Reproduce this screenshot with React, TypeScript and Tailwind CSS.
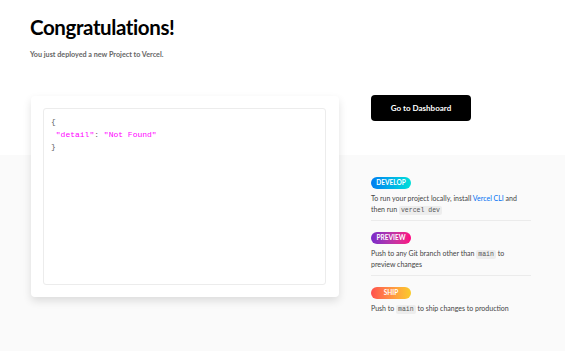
const codeClass =
  "inline-block rounded-[2px] bg-[#ededed] px-[2px] align-baseline font-['Liberation_Mono',monospace] text-[6.5px] leading-[9px] text-[#555]";

const steps = [
  {
    label: "DEVELOP",
    badge: "bg-gradient-to-r from-[#007cf0] to-[#00dfd8]",
    body: (
      <>
        To run your project locally, install{" "}
        <a href="#" className="text-[#0070f3]">
          Vercel CLI
        </a>{" "}
        and then run <code className={codeClass}>vercel dev</code>
      </>
    ),
  },
  {
    label: "PREVIEW",
    badge: "bg-gradient-to-r from-[#7928ca] to-[#ff0080]",
    body: (
      <>
        Push to any Git branch other than <code className={codeClass}>main</code> to preview changes
      </>
    ),
  },
  {
    label: "SHIP",
    badge: "bg-gradient-to-r from-[#ff4d4d] to-[#f9cb28]",
    body: (
      <>
        Push to <code className={codeClass}>main</code> to ship changes to production
      </>
    ),
  },
];

const App = () => {
  return (
    <div className="min-h-[351px] bg-[#fafafa] font-['Lato',sans-serif]">
      <header className="h-[155px] bg-white px-[30px] pt-[13px]">
        <h1 className="text-[20.5px] leading-[28px] font-bold tracking-[-0.4px] text-black">Congratulations!</h1>
        <p className="mt-[9px] text-[7.2px] leading-[10px] font-bold text-[#666]">
          You just deployed a new Project to Vercel.
        </p>
      </header>

      <main className="flex items-start px-[31px]">
        <div className="-mt-[59px] h-[201px] w-[308px] rounded-[4px] bg-white p-[12px] pr-[13px] shadow-[0_4px_9px_rgba(0,0,0,0.12)]">
          <div className="h-full rounded-[3px] border border-[#ececec] px-[7px] pt-[7px] font-['Liberation_Mono',monospace] text-[8px] leading-[12.5px] text-[#666]">
            <div>{"{"}</div>
            <div className="whitespace-pre">
              {" "}
              <span className="text-[#f0f]">"detail"</span>:<span className="text-[#f0f]"> "Not Found"</span>
            </div>
            <div>{"}"}</div>
          </div>
        </div>

        <div className="-mt-[60px] ml-[32px] w-[160px]">
          <button className="flex h-[26px] w-[100px] items-center justify-center rounded-[4px] bg-black text-[8px] font-bold text-white">
            Go to Dashboard
          </button>

          <ul className="mt-[56px]">
            {steps.map((step, i) => (
              <li
                key={step.label}
                className={`pb-[5px] ${i > 0 ? "pt-[11px]" : ""} ${i < steps.length - 1 ? "border-b border-[#ebebeb]" : ""}`}
              >
                <span
                  className={`flex h-[12px] w-[40px] items-center justify-center rounded-full text-[6.5px] font-bold text-white ${step.badge}`}
                >
                  {step.label}
                </span>
                <p className="mt-[4px] pr-[8px] text-[7px] leading-[11px] text-[#444]">{step.body}</p>
              </li>
            ))}
          </ul>
        </div>
      </main>
    </div>
  );
};

export default App;
